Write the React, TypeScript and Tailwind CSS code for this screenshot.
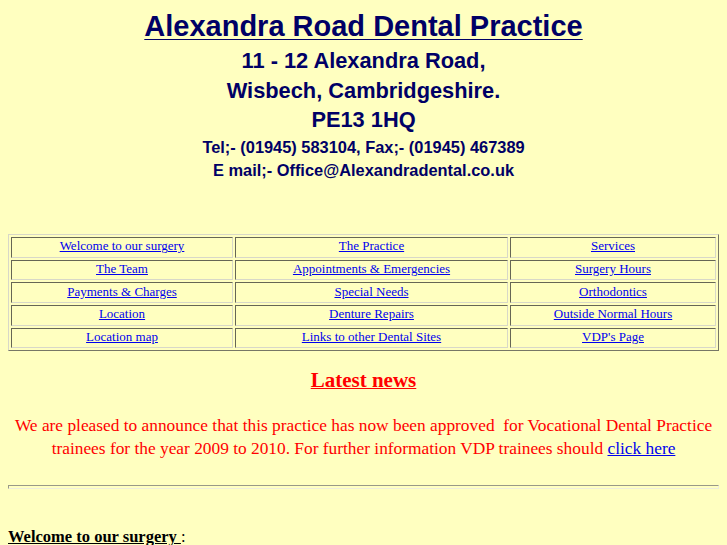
import React from 'react';

const rows: string[][] = [
    ['Welcome to our surgery', 'The Practice', 'Services'],
    ['The Team', 'Appointments & Emergencies', 'Surgery Hours'],
    ['Payments & Charges', 'Special Needs', 'Orthodontics'],
    ['Location', 'Denture Repairs', 'Outside Normal Hours'],
    ['Location map', 'Links to other Dental Sites', "VDP's Page"],
];

export default function App() {
    return (
        <div className="min-h-screen bg-[#ffffc0] p-2 font-['Liberation_Serif',serif] text-black">
            <div className="text-center font-['Liberation_Sans',Arial,sans-serif] font-bold text-[#000066]">
                <h1 className="pt-[3px] text-[29px] leading-[30px] underline decoration-1 underline-offset-[3px]">
                    Alexandra Road Dental Practice
                </h1>
                <div className="mt-[5px] text-[21.8px] leading-[30px]">
                    <p>11 - 12 Alexandra Road,</p>
                    <p>Wisbech, Cambridgeshire.</p>
                    <p className="-mt-[1px]">PE13 1HQ</p>
                </div>
                <div className="mt-[1px] text-[16.4px] leading-[23px]">
                    <p>Tel;- (01945) 583104, Fax;- (01945) 467389</p>
                    <p>E mail;- Office@Alexandradental.co.uk</p>
                </div>
            </div>

            <table className="mt-[52px] w-full border-separate border-spacing-[2px] border border-t-[#d8d8c8] border-l-[#d8d8c8] border-b-[#777766] border-r-[#777766] text-[13px]">
                <tbody>
                    {rows.map((row, i) => (
                        <tr key={i}>
                            {row.map((cell, j) => (
                                <td
                                    key={j}
                                    className={`h-[20.7px] border border-t-[#666655] border-l-[#666655] border-b-[#d8d8c8] border-r-[#d8d8c8] px-[1px] pb-[2px] text-center leading-[16px] ${j === 0 ? 'w-[222px]' : j === 1 ? 'w-[273px]' : ''}`}
                                >
                                    <a href="#" className="text-[#0000ee] underline">
                                        {cell}
                                    </a>
                                </td>
                            ))}
                        </tr>
                    ))}
                </tbody>
            </table>

            <div className="mt-[16px] text-center">
                <h2 className="text-[21px] font-bold leading-[26px] text-[#ff0000] underline decoration-1">Latest news</h2>
                <p className="mt-[21px] text-[17.35px] leading-[23px] text-[#ff0000]">
                    We are pleased to announce that this practice has now been approved&nbsp; for Vocational Dental Practice
                    trainees for the year 2009 to 2010. For further information VDP trainees should{' '}
                    <a href="#" className="text-[#0000ee] underline">
                        click here
                    </a>
                </p>
            </div>

            <hr className="mt-[25px] h-[4px] border border-t-[#999988] border-l-[#999988] border-b-[#eeeedd] border-r-[#eeeedd]" />

            <p className="mt-[38px] text-[16.5px] leading-[20px]">
                <b className="underline">Welcome to our surgery </b>:
            </p>
        </div>
    );
}
